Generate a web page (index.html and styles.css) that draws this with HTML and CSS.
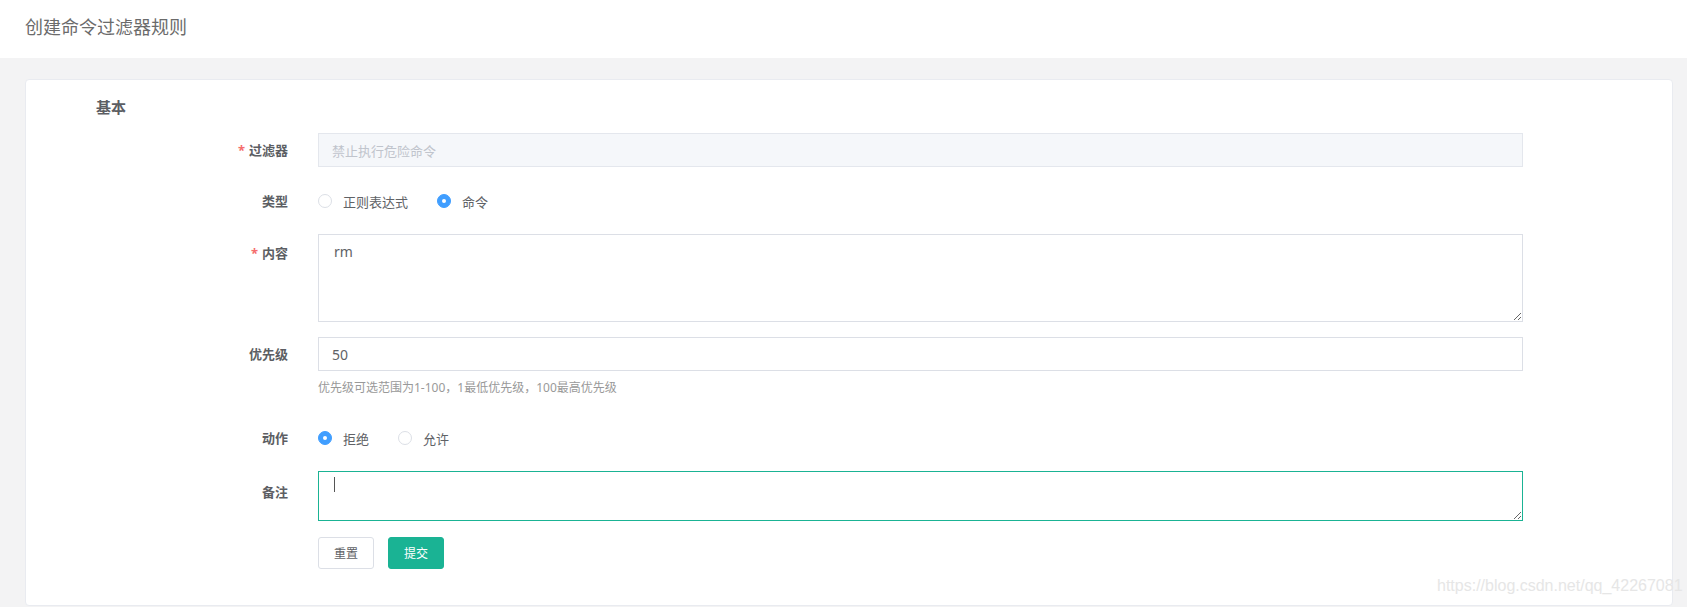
FILE: index.html
```html
<!DOCTYPE html>
<html lang="zh-CN">
<head>
<meta charset="utf-8">
<title>创建命令过滤器规则</title>
<link rel="stylesheet" href="styles.css">
</head>
<body>
<header class="page-header">
  <h1 class="page-title">创建命令过滤器规则</h1>
</header>
<main class="page-main">
  <section class="card">
    <h2 class="section-title">基本</h2>
    <form class="form">
      <div class="form-item row-1">
        <label class="form-label"><span class="req">*</span>过滤器</label>
        <div class="form-control">
          <input class="input input-disabled" type="text" placeholder="禁止执行危险命令" disabled>
        </div>
      </div>
      <div class="form-item row-2">
        <label class="form-label">类型</label>
        <div class="form-control radio-group">
          <span class="radio"><span class="radio-dot"></span><span class="radio-text">正则表达式</span></span>
          <span class="radio checked"><span class="radio-dot"></span><span class="radio-text">命令</span></span>
        </div>
      </div>
      <div class="form-item row-3">
        <label class="form-label label-ta"><span class="req">*</span>内容</label>
        <div class="form-control">
          <textarea class="textarea ta-content">rm</textarea>
        </div>
      </div>
      <div class="form-item row-4">
        <label class="form-label">优先级</label>
        <div class="form-control">
          <input class="input" type="text" value="50">
          <div class="help">优先级可选范围为1-100，1最低优先级，100最高优先级</div>
        </div>
      </div>
      <div class="form-item row-5">
        <label class="form-label">动作</label>
        <div class="form-control radio-group">
          <span class="radio checked"><span class="radio-dot"></span><span class="radio-text">拒绝</span></span>
          <span class="radio"><span class="radio-dot"></span><span class="radio-text">允许</span></span>
        </div>
      </div>
      <div class="form-item row-6">
        <label class="form-label label-ta2">备注</label>
        <div class="form-control ta-wrap">
          <textarea class="textarea ta-note focused"></textarea>
          <span class="caret"></span>
        </div>
      </div>
      <div class="form-item row-7">
        <div class="form-label"></div>
        <div class="form-control buttons">
          <button type="button" class="btn btn-default">重置</button>
          <button type="button" class="btn btn-primary">提交</button>
        </div>
      </div>
    </form>
  </section>
  <div class="watermark">https://blog.csdn.net/qq_42267081</div>
</main>
</body>
</html>
```
FILE: styles.css
```css
* { box-sizing: border-box; }
html, body {
  margin: 0;
  padding: 0;
  width: 1687px;
  height: 607px;
  overflow: hidden;
  background: #f3f3f4;
  font-family: "Noto Sans", "Noto Sans CJK SC", sans-serif;
  color: #606266;
}
.page-header {
  height: 58px;
  background: #fff;
  padding: 17px 25px 0;
}
.page-title {
  margin: 0;
  font-size: 18px;
  line-height: 20px;
  font-weight: normal;
  color: #6b6b6b;
}
.page-main {
  position: relative;
  padding: 21px 14px 0 25px;
}
.card {
  background: #fff;
  border: 1px solid #e9ebf0;
  border-radius: 4px;
  padding: 17px 0 35px;
  height: 527px;
}
.section-title {
  margin: 0 0 16px 70px;
  font-size: 15px;
  line-height: 20px;
  font-weight: bold;
  color: #5c5e63;
}
.form-item {
  display: flex;
  align-items: flex-start;
}
.row-1 { margin-bottom: 17px; }
.row-2 { margin-bottom: 16px; }
.row-3 { margin-bottom: 15px; }
.row-4 { margin-bottom: 24px; }
.row-5 { margin-bottom: 16px; }
.row-6 { margin-bottom: 16px; }
.form-label {
  width: 292px;
  flex: none;
  padding-right: 30px;
  text-align: right;
  font-size: 13px;
  line-height: 34px;
  font-weight: bold;
  color: #5c5e63;
}
.label-ta { padding-top: 2px; }
.label-ta2 { padding-top: 4px; }
.req {
  color: #f56c6c;
  margin-right: 4px;
  font-weight: bold;
}
.form-control {
  width: 1205px;
  flex: none;
}
.input {
  display: block;
  width: 100%;
  height: 34px;
  border: 1px solid #dcdfe6;
  border-radius: 0;
  padding: 0 13px;
  font-family: inherit;
  font-size: 14px;
  color: #606266;
  background: #fff;
  outline: none;
}
.input-disabled {
  background: #f5f7fa;
  border-color: #e4e7ed;
}
.input::placeholder {
  color: #c0c4cc;
  font-size: 13px;
}
.help {
  margin-top: 8px;
  font-size: 12px;
  line-height: 18px;
  color: #999;
}
.radio-group {
  display: flex;
  align-items: center;
  height: 34px;
}
.radio {
  display: inline-flex;
  align-items: center;
  margin-right: 29px;
  font-size: 13px;
  color: #606266;
}
.radio-dot {
  width: 14px;
  height: 14px;
  border: 1px solid #dcdfe6;
  border-radius: 50%;
  background: #fff;
  position: relative;
}
.radio.checked .radio-dot {
  background: #409eff;
  border-color: #409eff;
}
.radio.checked .radio-dot::after {
  content: "";
  position: absolute;
  left: 4px;
  top: 4px;
  width: 4px;
  height: 4px;
  border-radius: 50%;
  background: #fff;
}
.radio-text {
  padding-left: 11px;
}
.textarea {
  display: block;
  width: 100%;
  border: 1px solid #dcdfe6;
  border-radius: 0;
  padding: 7px 15px;
  font-family: inherit;
  font-size: 14px;
  line-height: 20px;
  color: #606266;
  outline: none;
  resize: vertical;
  margin: 0;
}
.ta-content { height: 88px; }
.ta-note { height: 50px; }
.textarea.focused { border-color: #1ab394; }
.ta-wrap { position: relative; }
.caret {
  position: absolute;
  left: 16px;
  top: 6px;
  width: 1px;
  height: 15px;
  background: #555;
}
.buttons {
  display: flex;
  gap: 14px;
}
.btn {
  width: 56px;
  height: 32px;
  border-radius: 3px;
  font-family: inherit;
  font-size: 12px;
  padding: 0;
  cursor: pointer;
}
.btn-default {
  background: #fff;
  border: 1px solid #dcdfe6;
  color: #606266;
}
.btn-primary {
  background: #1ab394;
  border: 1px solid #1ab394;
  color: #fff;
}
.watermark {
  position: absolute;
  left: 1437px;
  top: 518px;
  font-family: "Liberation Sans", Arial, sans-serif;
  font-size: 16px;
  line-height: 20px;
  color: #e6e6e6;
  white-space: nowrap;
}
```
